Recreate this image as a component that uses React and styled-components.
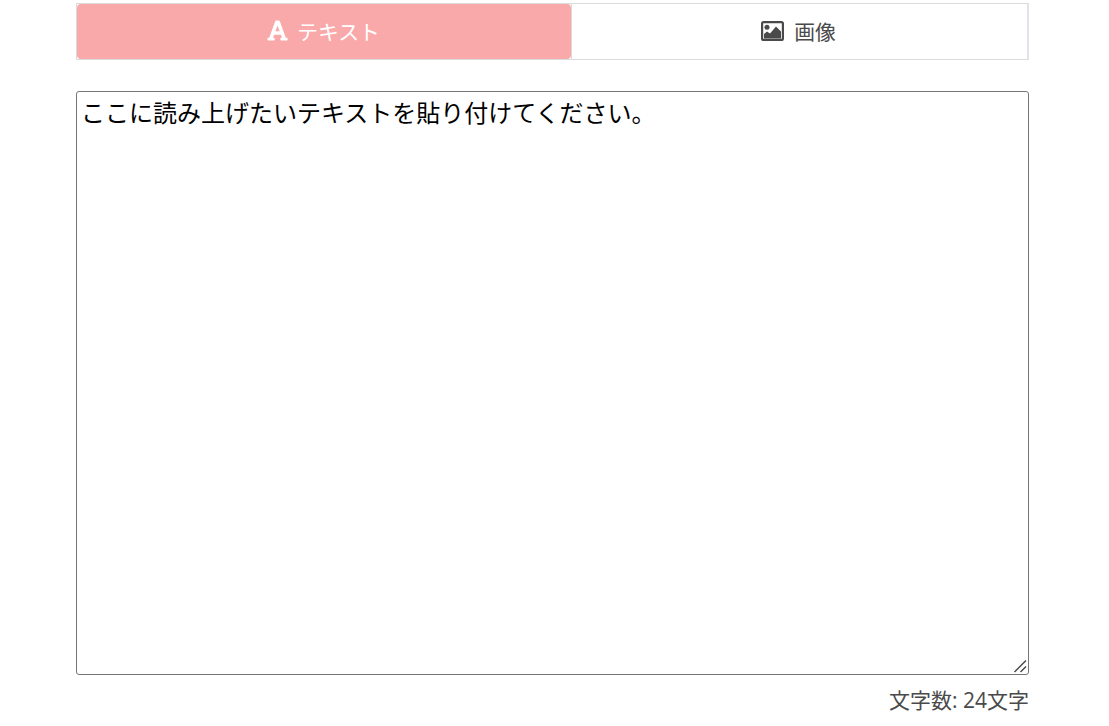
import React, { useState } from "react";
import styled, { createGlobalStyle } from "styled-components";
import { FaFont } from "react-icons/fa";

const GlobalStyle = createGlobalStyle`
  html, body {
    margin: 0;
    padding: 0;
    background: #fff;
    font-family: "Open Sans", "Noto Sans CJK JP", sans-serif;
    color: #4a4a4a;
  }
  * {
    box-sizing: border-box;
  }
`;

const Page = styled.div`
  width: 953px;
  margin: 0 0 0 76px;
  padding-top: 3px;
`;

const Tabs = styled.div`
  display: flex;
  height: 57px;
  margin-bottom: 31px;
`;

const Tab = styled.div`
  flex: 1 1 auto;
  padding: 0;
  border: 1px solid #dbdbdb;
  border-left-width: ${({ $last }) => ($last ? "0" : "1px")};
  border-right: ${({ $last }) => ($last ? "2px solid #e0e3e8" : "1px solid #dbdbdb")};
`;

const TabLink = styled.button`
  display: flex;
  justify-content: center;
  align-items: center;
  gap: ${({ $gap }) => $gap}px;
  width: 100%;
  height: 100%;
  padding: 0 2px 2px 0;
  border: none;
  border-radius: 4px;
  font-family: inherit;
  font-size: 20.8px;
  cursor: pointer;
  background: ${({ $active }) => ($active ? "#f9a9aa" : "#fff")};
  color: ${({ $active }) => ($active ? "#fff" : "#4a4a4a")};

  > svg:first-child {
    font-size: 23px;
  }
`;

const ImageIcon = () => (
  <svg width="23" height="20" viewBox="0 0 23 20" fill="none">
    <rect x="1.1" y="1.1" width="20.8" height="17.8" rx="1.5" stroke="#4a4a4a" strokeWidth="2.2" />
    <circle cx="6" cy="6.2" r="2.5" fill="#4a4a4a" />
    <path d="M3 17.5v-4.5l3-2.5 3 2 6-7 5 5v7z" fill="#4a4a4a" />
  </svg>
);

const BoxWrap = styled.div`
  position: relative;
`;

const TextBox = styled.textarea`
  display: block;
  width: 100%;
  height: 584px;
  padding: 5px 4px;
  margin: 0;
  border: 1px solid #767676;
  border-radius: 3px;
  font-family: inherit;
  font-size: 24px;
  line-height: 32px;
  color: #000;
  outline: none;
  resize: none;
`;

const Grip = styled.svg`
  position: absolute;
  right: 2px;
  bottom: 2px;
  pointer-events: none;
`;

const Counter = styled.p`
  margin: 12px 0 0;
  font-size: 21px;
  line-height: 27px;
  text-align: right;
  color: #4a4a4a;
`;

export default function App() {
  const [mode, setMode] = useState("text");
  const [text, setText] = useState("ここに読み上げたいテキストを貼り付けてください。");

  return (
    <>
      <GlobalStyle />
      <Page>
        <Tabs>
          <Tab>
            <TabLink $gap={8} $active={mode === "text"} onClick={() => setMode("text")}>
              <FaFont />
              テキスト
            </TabLink>
          </Tab>
          <Tab $last>
            <TabLink $gap={10} $active={mode === "image"} onClick={() => setMode("image")}>
              <ImageIcon />
              画像
            </TabLink>
          </Tab>
        </Tabs>
        <BoxWrap>
          <TextBox value={text} onChange={(e) => setText(e.target.value)} />
          <Grip width="14" height="14" viewBox="0 0 14 14">
            <path d="M1.5 13 13 1.5M7.5 13 13 7.5" stroke="#4a4a4a" strokeWidth="1.5" fill="none" />
          </Grip>
        </BoxWrap>
        <Counter>文字数: {text.length}文字</Counter>
      </Page>
    </>
  );
}
